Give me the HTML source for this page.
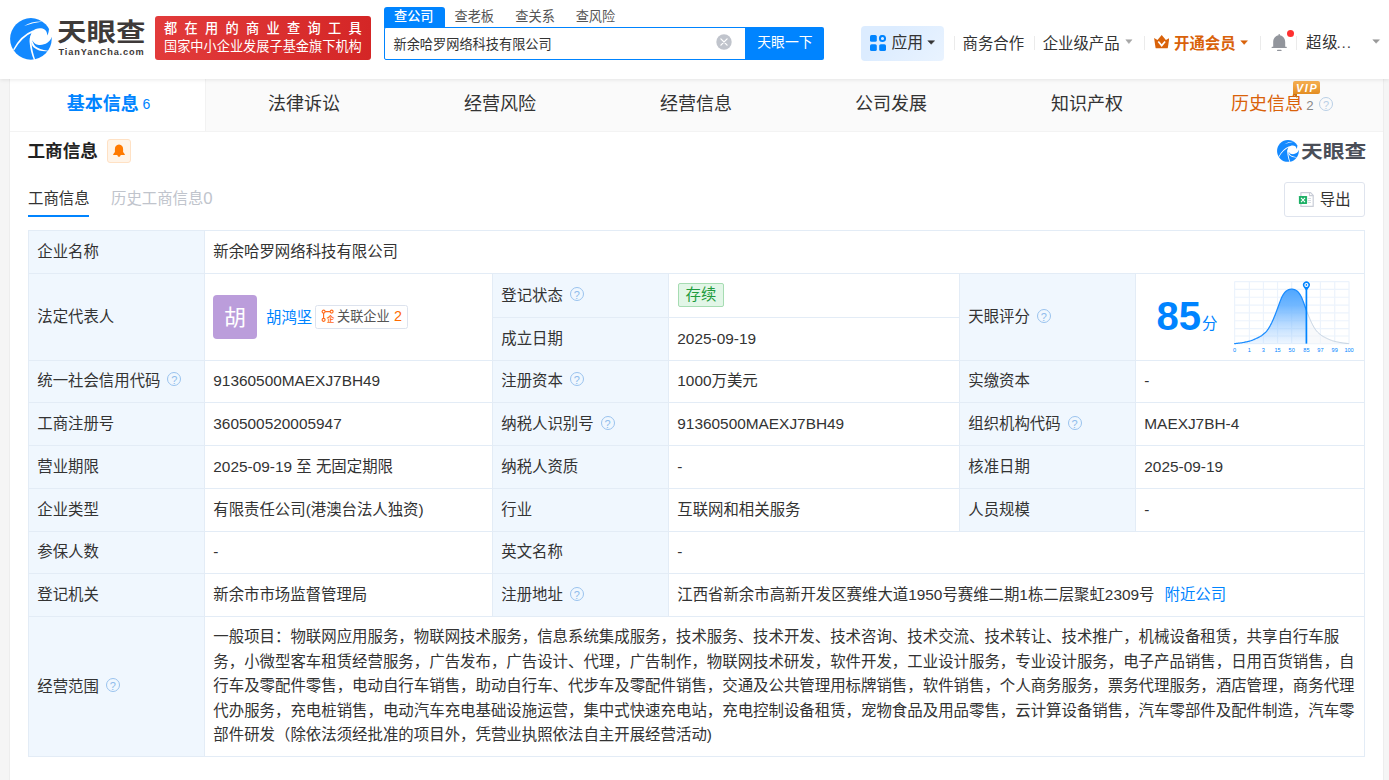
<!DOCTYPE html>
<html lang="zh-CN">
<head>
<meta charset="utf-8">
<title>天眼查</title>
<style>
*{box-sizing:border-box;margin:0;padding:0}
html,body{width:1389px;height:780px;overflow:hidden;background:#f5f5f5;}
body{font-family:"Liberation Sans","Noto Sans CJK SC",sans-serif;color:#333;font-size:15.4px;position:relative}
.abs{position:absolute;white-space:nowrap}
#hdr{position:absolute;left:0;top:0;width:1389px;height:79px;background:#fff;box-shadow:0 1px 4px rgba(0,0,0,.09);z-index:5}
#main{position:absolute;left:9px;top:78px;width:1375px;height:702px;background:#fff;border-left:1px solid #ededed;border-right:1px solid #ededed;box-sizing:border-box}
#tabs{position:absolute;left:0;top:0;width:1373px;height:54px;background:#fafafa;border-bottom:1px solid #f3f3f3}
.tab{position:absolute;top:1px;height:52px;width:196px;text-align:center;line-height:50px;font-size:18px;color:#333}
.tab.on{background:#fff;color:#0084ff;font-weight:bold;border-right:1px solid #f2f2f2}
table{position:absolute;left:18px;top:152px;width:1336px;border-collapse:collapse;table-layout:fixed}
td{border:1px solid #e3ecf6;padding:0 8.3px;font-size:15.4px;line-height:22px;vertical-align:middle;color:#333;white-space:nowrap}
td.l{background:#f0f7fe}
.q{display:inline-block;width:14px;height:14px;border:1.45px solid #9ac3ee;border-radius:50%;vertical-align:-0.9px;margin-left:6.9px;color:#8fbcec;font:11px/15px "Liberation Sans",sans-serif;text-align:center;overflow:hidden}
a{color:#0084ff;text-decoration:none}
tr.up td{padding-bottom:2px}
</style>
</head>
<body>
<div id="hdr">
  <svg class="abs" style="left:10px;top:17.5px" width="42" height="42" viewBox="0 0 42 42"><circle cx="20.9" cy="20.9" r="20.8" fill="#1389ff"/>
<g fill="#fff">
<path d="M3.1 31.6 Q10.4 17.2 22.6 12.5 L23.6 14 Q12 18.6 4.1 32.4 Z"/>
<path d="M22.3 13 C25.5 10.4 31 9 34.9 11.8 C36.4 13 37.2 15 37.3 17.4 C38.3 15.6 38.8 13.6 38.9 11.6 L44 9 L44 19.6 L41.7 19.1 C40 24.6 34 27.9 27.7 26.8 C25.2 26.3 23.6 25 22.4 22.6 L21.2 24 L19.8 21 Z"/>
<path d="M22.7 13.3 C20.3 17 19.3 20.5 19.6 24 C20 30.5 21.6 36.5 24 42.2 L25.4 42.2 C23.2 36 21.9 30.5 21.7 26 L22.4 22.6 Z"/>
<path d="M22.4 22.6 C23 25 24 27 25.6 28.4 C28 30.4 32 31.6 37.9 32.7 L37.9 33.2 C32 33.6 27.5 32.6 24.2 29.8 C22.8 28.6 22 27.4 21.6 26 Z"/>
<path d="M14.1 7.9 Q22 3 32.8 3.5 Q22.5 5 14.1 7.9 Z"/>
</g></svg>
  <div class="abs" id="lg1" style="left:57px;top:13px;font-size:25px;font-weight:700;color:#3e3a39;line-height:38px;transform-origin:0 50%;transform:scaleX(1.18)">天眼查</div>
  <div class="abs" id="lg2" style="left:58.5px;top:45.6px;font-size:9.2px;font-weight:bold;color:#3e3a39;line-height:12px;letter-spacing:.87px">TianYanCha.com</div>
  <div class="abs" style="left:155px;top:16px;width:216px;height:44px;border-radius:3px;background:linear-gradient(90deg,#e23b3b,#d42626);"></div>
  <div class="abs" id="bn1" style="left:164px;top:19px;font-size:13.2px;font-weight:500;color:#fff;letter-spacing:7.3px;line-height:19px">都在用的商业查询工具</div>
  <div class="abs" id="bn2" style="left:164px;top:37.4px;font-size:13.2px;color:#fff;line-height:19px;font-weight:400">国家中小企业发展子基金旗下机构</div>
  <div class="abs" style="left:384px;top:6.6px;width:61px;height:21px;background:#0084ff;border-radius:3px 3px 0 0"></div>
  <div class="abs" id="st1" style="left:394px;top:6.5px;font-size:13.2px;color:#fff;line-height:20px;font-weight:500">查公司</div>
  <div class="abs" id="st2" style="left:454.5px;top:7px;font-size:13.2px;color:#555;line-height:20px">查老板</div>
  <div class="abs" id="st3" style="left:515.3px;top:7px;font-size:13.2px;color:#555;line-height:20px">查关系</div>
  <div class="abs" id="st4" style="left:575.7px;top:7px;font-size:13.2px;color:#555;line-height:20px">查风险</div>
  <div class="abs" style="left:384px;top:27px;width:362px;height:33px;border:1px solid #0084ff;border-radius:2px 0 0 2px;background:#fff"></div>
  <div class="abs" id="sq" style="left:393.5px;top:35px;font-size:13.2px;color:#333;line-height:20px">新余哈罗网络科技有限公司</div>
  <svg class="abs" style="left:716px;top:34px" width="16" height="16" viewBox="0 0 16 16"><circle cx="8" cy="8" r="7.7" fill="#c0c4cc"/><path d="M4.9 4.9L11.1 11.1M11.1 4.9L4.9 11.1" stroke="#fff" stroke-width="1.25" stroke-linecap="round"/></svg>
  <div class="abs" style="left:745px;top:27px;width:79px;height:33px;background:#0084ff;border-radius:0 2px 2px 0"></div>
  <div class="abs" id="sb" style="left:757.3px;top:32px;font-size:13.8px;color:#fff;line-height:22px">天眼一下</div>
  <div class="abs" style="left:861px;top:26px;width:83px;height:35px;background:linear-gradient(135deg,#dcecff 30%,#e9f3ff);border-radius:4px"></div>
  <svg class="abs" style="left:870.3px;top:35.1px" width="16" height="16" viewBox="0 0 16 16"><rect x="0" y="0" width="6.8" height="6.8" rx="1.6" fill="#0084ff"/><rect x="0" y="9.2" width="6.8" height="6.8" rx="1.6" fill="#0084ff"/><rect x="9.2" y="9.2" width="6.8" height="6.8" rx="1.6" fill="#0084ff"/><circle cx="12.5" cy="3.5" r="2.55" fill="none" stroke="#0084ff" stroke-width="2"/></svg>
  <div class="abs" id="n1" style="left:891.5px;top:31px;font-size:15.8px;color:#333;line-height:24px">应用</div>
  <svg class="abs" style="left:926.6px;top:39.7px" width="8.4" height="5.0" viewBox="-0.5 -0.5 8.4 5.0"><path d="M0.3 0.2 H7.1000000000000005 L3.7 3.8 Z" fill="#333" stroke="#333" stroke-width=".5" stroke-linejoin="round"/></svg>
  <div class="abs" style="left:954px;top:36px;width:1px;height:14px;background:#ebebeb"></div>
  <div class="abs" id="n2" style="left:962.5px;top:32px;font-size:15.4px;color:#333;line-height:24px">商务合作</div>
  <div class="abs" style="left:1034px;top:36px;width:1px;height:14px;background:#ebebeb"></div>
  <div class="abs" id="n3" style="left:1042.7px;top:31.5px;font-size:15.4px;color:#333;line-height:24px">企业级产品</div>
  <svg class="abs" style="left:1124.8px;top:39.4px" width="7.8" height="5.3" viewBox="-0.5 -0.5 7.8 5.3"><path d="M0.3 0.2 H6.5 L3.4 4.1 Z" fill="#a6a6a6" stroke="#a6a6a6" stroke-width=".5" stroke-linejoin="round"/></svg>
  <div class="abs" style="left:1144px;top:36px;width:1px;height:14px;background:#ebebeb"></div>
  <svg class="abs" style="left:1154px;top:35px" width="15.4" height="13.5" viewBox="0 0 15.4 13.5"><path d="M0.1 3 L3.5 4.9 L7.7 0 L11.9 4.9 L15.3 3 L13.9 12.4 Q13.8 13.3 13 13.3 H2.4 Q1.6 13.3 1.5 12.4 Z" fill="#d9620a"/><path d="M4.3 6.5 L7.7 10.6 L11.1 6.5" stroke="#fff" stroke-width="1.7" fill="none"/></svg>
  <div class="abs" id="n4" style="left:1174px;top:31.5px;font-size:15.4px;color:#d9620a;font-weight:bold;line-height:24px">开通会员</div>
  <svg class="abs" style="left:1240.4px;top:39.7px" width="8.3" height="5.1" viewBox="-0.5 -0.5 8.3 5.1"><path d="M0.3 0.2 H7.0 L3.65 3.8999999999999995 Z" fill="#d9620a" stroke="#d9620a" stroke-width=".5" stroke-linejoin="round"/></svg>
  <div class="abs" style="left:1260px;top:36px;width:1px;height:14px;background:#ebebeb"></div>
  <svg class="abs" style="left:1271px;top:33px" width="17" height="19" viewBox="0 0 17 19"><path d="M7.6 1 h1.2 v1.2 C12 2.8 14.2 5.5 14.2 9 V13.7 H15.3 Q15.8 13.7 15.8 14.4 Q15.8 15.1 15.3 15.1 H1.1 Q0.6 15.1 0.6 14.4 Q0.6 13.7 1.1 13.7 H2.2 V9 C2.2 5.5 4.4 2.8 7.6 2.2 Z" fill="#92959c"/><rect x="6" y="16.7" width="4.6" height="1.4" rx=".7" fill="#92959c"/></svg>
  <div class="abs" style="left:1287px;top:30px;width:7px;height:7px;border-radius:50%;background:#ff3030"></div>
  <div class="abs" style="left:1296px;top:36px;width:1px;height:14px;background:#ebebeb"></div>
  <div class="abs" id="n5" style="left:1306px;top:30.5px;font-size:15.4px;color:#333;line-height:24px;letter-spacing:.9px">超级<span style="margin-left:-2.2px;color:#444">...</span></div>
  <svg class="abs" style="left:1372.4px;top:38.7px" width="8.3" height="5.0" viewBox="-0.5 -0.5 8.3 5.0"><path d="M0.3 0.2 H7.0 L3.65 3.8 Z" fill="#999" stroke="#999" stroke-width=".5" stroke-linejoin="round"/></svg>
</div>

<div id="main">
  <div id="tabs">
    <div class="tab on" style="left:0;width:196px;padding-left:2px"><span id="t1">基本信息</span><span style="font-size:14px;font-weight:normal;margin-left:3.6px;position:relative;top:-1px">6</span></div>
    <div class="tab" style="left:196px"><span id="t2">法律诉讼</span></div>
    <div class="tab" style="left:392px"><span id="t3">经营风险</span></div>
    <div class="tab" style="left:588px"><span id="t4">经营信息</span></div>
    <div class="tab" style="left:783px"><span id="t5">公司发展</span></div>
    <div class="tab" style="left:979px"><span id="t6">知识产权</span></div>
    <div class="tab" style="left:1175px;color:#d9620a;text-align:left;padding-left:46px"><span id="t7">历史信息</span><span style="font-size:13.2px;color:#888;margin-left:3.2px">2</span><span class="q" style="margin-left:5.6px;border-color:#b9cfe6;color:#b9cfe6">?</span></div>
    <!-- VIP -->
    <div class="abs" style="left:1283px;top:3.4px;width:27px;height:12.4px;border-radius:2px 2px 2px 0;background:linear-gradient(180deg,#f7b052,#e38d22)"></div>
    <div class="abs" style="left:1283px;top:15.8px;width:0;height:0;border-top:4px solid #c97414;border-left:4px solid transparent"></div>
    <div class="abs" id="vip" style="left:1286px;top:3.6px;font-size:10.8px;font-weight:bold;font-style:italic;color:#fff;line-height:12px;letter-spacing:1.6px">VIP</div>
  </div>
  <div class="abs" id="sec" style="left:17.5px;top:60px;font-size:17.6px;font-weight:bold;color:#222;line-height:26px">工商信息</div>
  <div class="abs" style="left:97px;top:61px;width:24px;height:24px;background:#fff4e8;border:1px solid #ffe1c4;border-radius:3px"></div>
  <svg class="abs" style="left:102px;top:66px" width="14" height="14" viewBox="0 0 14 14"><path d="M7 0.5 C4.2 0.5 2.9 2.7 2.9 5 V8 L1.2 10.2 V11 H12.8 V10.2 L11.1 8 V5 C11.1 2.7 9.8 0.5 7 0.5 Z" fill="#ff7a00"/><path d="M5.4 11 H8.6 C8.6 13.4 5.4 13.4 5.4 11Z" fill="#ff7a00"/></svg>
  <!-- watermark logo -->
  <svg class="abs" style="left:1267px;top:62px" width="22" height="22" viewBox="0 0 42 42"><circle cx="20.9" cy="20.9" r="20.8" fill="#1389ff"/>
<g fill="#fff">
<path d="M3.1 31.6 Q10.4 17.2 22.6 12.5 L23.6 14 Q12 18.6 4.1 32.4 Z"/>
<path d="M22.3 13 C25.5 10.4 31 9 34.9 11.8 C36.4 13 37.2 15 37.3 17.4 C38.3 15.6 38.8 13.6 38.9 11.6 L44 9 L44 19.6 L41.7 19.1 C40 24.6 34 27.9 27.7 26.8 C25.2 26.3 23.6 25 22.4 22.6 L21.2 24 L19.8 21 Z"/>
<path d="M22.7 13.3 C20.3 17 19.3 20.5 19.6 24 C20 30.5 21.6 36.5 24 42.2 L25.4 42.2 C23.2 36 21.9 30.5 21.7 26 L22.4 22.6 Z"/>
<path d="M22.4 22.6 C23 25 24 27 25.6 28.4 C28 30.4 32 31.6 37.9 32.7 L37.9 33.2 C32 33.6 27.5 32.6 24.2 29.8 C22.8 28.6 22 27.4 21.6 26 Z"/>
<path d="M14.1 7.9 Q22 3 32.8 3.5 Q22.5 5 14.1 7.9 Z"/>
</g></svg>
  <div class="abs" id="wm" style="left:1291px;top:58px;font-size:18.6px;font-weight:700;color:#4a4e57;line-height:32px;transform-origin:0 50%;transform:scaleX(1.17)">天眼查</div>
  <div class="abs" id="su1" style="left:18px;top:110px;font-size:15.4px;color:#333;line-height:22px">工商信息</div>
  <div class="abs" style="left:18px;top:137px;width:61px;height:2px;background:#0084ff"></div>
  <div class="abs" id="su2" style="left:101px;top:110px;font-size:15.4px;color:#c0c4cc;line-height:22px">历史工商信息<span style="font-size:16.8px;line-height:1;position:relative;top:-.4px">0</span></div>
  <div class="abs" style="left:1274px;top:104px;width:81px;height:35px;border:1px solid #dfe4ee;border-radius:3px;background:#fff"></div>
  <svg class="abs" style="left:1288px;top:113px" width="17" height="17" viewBox="0 0 17 17"><path d="M2.9 1.7 H12.6 L15.2 4.3 V15.4 H2.9 Z" fill="#fff" stroke="#c9cdd7" stroke-width="1.2" stroke-linejoin="round"/><path d="M11.5 1.7 V4.6 H15.2" fill="none" stroke="#c9cdd7" stroke-width="1.1"/><path d="M10.1 7.5h2.9M10.1 9.5h2.9M10.1 11.5h2.9" stroke="#d3d6de" stroke-width=".9"/><rect x="0.9" y="5" width="8.2" height="7.9" rx=".6" fill="#1eb066"/><path d="M3 6.9 L7 11.1 M7 6.9 L3 11.1" stroke="#fff" stroke-width="1.05"/></svg>
  <div class="abs" id="ex" style="left:1309.8px;top:111px;font-size:15.4px;color:#333;line-height:22px">导出</div>

  <table>
    <colgroup><col style="width:176px"><col style="width:288px"><col style="width:176px"><col style="width:291px"><col style="width:176px"><col style="width:229px"></colgroup>
    <tr style="height:43px"><td class="l">企业名称</td><td colspan="5">新余哈罗网络科技有限公司</td></tr>
    <tr style="height:44px"><td class="l" rowspan="2">法定代表人</td><td rowspan="2"></td><td class="l">登记状态<span class="q">?</span></td><td><span style="display:inline-block;height:24px;line-height:22px;padding:0 6.5px;border:1px solid #a6dcb2;background:#e2f6e7;color:#1f9b3e;border-radius:2px;position:relative;top:-1px;left:.7px">存续</span></td><td class="l" rowspan="2">天眼评分<span class="q">?</span></td><td rowspan="2"></td></tr>
    <tr style="height:43px"><td class="l">成立日期</td><td>2025-09-19</td></tr>
    <tr class="up" style="height:42px"><td class="l">统一社会信用代码<span class="q">?</span></td><td>91360500MAEXJ7BH49</td><td class="l">注册资本<span class="q">?</span></td><td>1000万美元</td><td class="l">实缴资本</td><td>-</td></tr>
    <tr style="height:43px"><td class="l">工商注册号</td><td>360500520005947</td><td class="l">纳税人识别号<span class="q">?</span></td><td>91360500MAEXJ7BH49</td><td class="l">组织机构代码<span class="q">?</span></td><td>MAEXJ7BH-4</td></tr>
    <tr style="height:43px"><td class="l">营业期限</td><td>2025-09-19 至 无固定期限</td><td class="l">纳税人资质</td><td>-</td><td class="l">核准日期</td><td>2025-09-19</td></tr>
    <tr style="height:43px"><td class="l">企业类型</td><td>有限责任公司(港澳台法人独资)</td><td class="l">行业</td><td>互联网和相关服务</td><td class="l">人员规模</td><td>-</td></tr>
    <tr class="up" style="height:42px"><td class="l">参保人数</td><td>-</td><td class="l">英文名称</td><td colspan="3">-</td></tr>
    <tr style="height:43px"><td class="l">登记机关</td><td>新余市市场监督管理局</td><td class="l">注册地址<span class="q">?</span></td><td colspan="3">江西省新余市高新开发区赛维大道1950号赛维二期1栋二层聚虹2309号<a style="margin-left:10px">附近公司</a></td></tr>
    <tr style="height:140px"><td class="l">经营范围<span class="q">?</span></td><td colspan="5" style="white-space:normal;line-height:24.4px;font-size:15.43px;padding-right:4px">一般项目：物联网应用服务，物联网技术服务，信息系统集成服务，技术服务、技术开发、技术咨询、技术交流、技术转让、技术推广，机械设备租赁，共享自行车服务，小微型客车租赁经营服务，广告发布，广告设计、代理，广告制作，物联网技术研发，软件开发，工业设计服务，专业设计服务，电子产品销售，日用百货销售，自行车及零配件零售，电动自行车销售，助动自行车、代步车及零配件销售，交通及公共管理用标牌销售，软件销售，个人商务服务，票务代理服务，酒店管理，商务代理代办服务，充电桩销售，电动汽车充电基础设施运营，集中式快速充电站，充电控制设备租赁，宠物食品及用品零售，云计算设备销售，汽车零部件及配件制造，汽车零部件研发（除依法须经批准的项目外，凭营业执照依法自主开展经营活动)</td></tr>
  </table>
  <!-- legal rep overlay -->
  <div class="abs" style="left:203px;top:217px;width:44px;height:44px;border-radius:4px;background:#bb9ddb"></div>
  <div class="abs" id="av" style="left:214px;top:224px;font-size:22px;color:#fff;line-height:32px">胡</div>
  <div class="abs" id="nm" style="left:256px;top:228.6px;font-size:15.4px;color:#0084ff;line-height:22px">胡鸿坚</div>
  <div class="abs" style="left:305px;top:227px;width:93px;height:24px;border:1px solid #dde3ee;border-radius:2.5px;background:#fff"></div>
  <svg class="abs" style="left:310.6px;top:231.1px" width="14" height="14" viewBox="0 0 14 14"><g fill="none" stroke="#ff6a1a" stroke-width="1.15"><circle cx="2.6" cy="2.6" r="1.5"/><circle cx="10.6" cy="2.6" r="1.5"/><circle cx="2.6" cy="10.8" r="1.5"/><path d="M4.1 2.6 H9.1 M2.6 4.1 V9.3"/></g><text x="9.5" y="12.6" font-size="7.6" font-weight="bold" fill="#ff6a1a" text-anchor="middle" font-family="Noto Sans CJK SC, sans-serif">企</text></svg>
  <div class="abs" id="rl" style="left:327px;top:229px;font-size:13.2px;color:#555;line-height:20px">关联企业 <span style="color:#ff6a00;margin-left:.6px;font-size:14.4px;line-height:1">2</span></div>
  <!-- score -->
  <div class="abs" id="sc" style="left:1146.5px;top:214px;font-size:40px;font-weight:bold;color:#0084ff;line-height:48px">85</div>
  <div class="abs" id="fen" style="left:1192px;top:235px;font-size:15.4px;color:#0084ff;line-height:22px">分</div>
  <svg class="abs" style="left:1220px;top:198px" width="130" height="80" viewBox="0 0 130 80">
<defs><linearGradient id="cg" x1="0" y1="0" x2="0" y2="1"><stop offset="0" stop-color="#4ea6ff"/><stop offset=".3" stop-color="#6ab4ff" stop-opacity=".95"/><stop offset="1" stop-color="#9dcbff" stop-opacity=".18"/></linearGradient></defs>
<g stroke="#ecf3fc" stroke-width="1.2"><line x1="4.61" y1="5.54" x2="4.61" y2="67.64"/><line x1="19.38" y1="5.54" x2="19.38" y2="67.64"/><line x1="33.41" y1="5.54" x2="33.41" y2="67.64"/><line x1="47.53" y1="5.54" x2="47.53" y2="67.64"/><line x1="61.65" y1="5.54" x2="61.65" y2="67.64"/><line x1="76.41" y1="5.54" x2="76.41" y2="67.64"/><line x1="90.44" y1="5.54" x2="90.44" y2="67.64"/><line x1="104.74" y1="5.54" x2="104.74" y2="67.64"/><line x1="119.05" y1="5.54" x2="119.05" y2="67.64"/><line x1="4.61" y1="5.54" x2="119.05" y2="5.54"/><line x1="4.61" y1="13.38" x2="119.05" y2="13.38"/><line x1="4.61" y1="21.23" x2="119.05" y2="21.23"/><line x1="4.61" y1="29.07" x2="119.05" y2="29.07"/><line x1="4.61" y1="36.91" x2="119.05" y2="36.91"/><line x1="4.61" y1="44.76" x2="119.05" y2="44.76"/><line x1="4.61" y1="52.60" x2="119.05" y2="52.60"/><line x1="4.61" y1="59.99" x2="119.05" y2="59.99"/><line x1="4.61" y1="67.64" x2="119.05" y2="67.64"/></g>
<path d="M4.15 67.64 L4.71 67.58 L5.45 67.51 L6.34 67.42 L7.32 67.32 L8.36 67.20 L9.40 67.08 L10.42 66.95 L11.35 66.81 L12.25 66.67 L13.18 66.50 L14.11 66.32 L15.03 66.14 L15.93 65.95 L16.78 65.77 L17.56 65.59 L18.27 65.43 L18.89 65.28 L19.42 65.14 L19.89 65.01 L20.32 64.89 L20.72 64.76 L21.12 64.63 L21.52 64.48 L21.96 64.32 L22.43 64.15 L22.89 63.97 L23.35 63.78 L23.81 63.58 L24.27 63.38 L24.73 63.18 L25.19 62.97 L25.66 62.75 L26.12 62.54 L26.60 62.31 L27.07 62.08 L27.55 61.85 L28.02 61.61 L28.48 61.38 L28.92 61.14 L29.35 60.91 L29.74 60.69 L30.10 60.50 L30.44 60.31 L30.78 60.12 L31.12 59.92 L31.47 59.68 L31.86 59.40 L32.30 59.06 L32.79 58.67 L33.32 58.24 L33.89 57.77 L34.47 57.27 L35.06 56.74 L35.64 56.19 L36.20 55.60 L36.73 55.00 L37.23 54.38 L37.70 53.74 L38.17 53.08 L38.62 52.38 L39.07 51.66 L39.52 50.91 L39.96 50.11 L40.42 49.28 L40.88 48.40 L41.35 47.47 L41.82 46.51 L42.28 45.51 L42.75 44.48 L43.21 43.44 L43.66 42.40 L44.11 41.34 L44.56 40.27 L45.00 39.15 L45.45 38.01 L45.89 36.86 L46.32 35.72 L46.74 34.60 L47.14 33.51 L47.53 32.48 L47.89 31.50 L48.24 30.54 L48.57 29.61 L48.89 28.71 L49.20 27.84 L49.50 26.99 L49.81 26.17 L50.11 25.38 L50.41 24.62 L50.70 23.89 L50.98 23.19 L51.25 22.51 L51.53 21.86 L51.82 21.23 L52.11 20.62 L52.42 20.03 L52.74 19.44 L53.07 18.87 L53.41 18.32 L53.76 17.79 L54.11 17.29 L54.46 16.81 L54.82 16.37 L55.19 15.97 L55.55 15.60 L55.92 15.26 L56.29 14.96 L56.67 14.69 L57.05 14.45 L57.44 14.22 L57.83 14.02 L58.23 13.84 L58.64 13.68 L59.06 13.55 L59.49 13.44 L59.92 13.35 L60.35 13.28 L60.78 13.23 L61.22 13.21 L61.65 13.20 L62.08 13.21 L62.51 13.23 L62.94 13.28 L63.38 13.35 L63.81 13.44 L64.23 13.55 L64.65 13.68 L65.06 13.84 L65.46 14.02 L65.85 14.22 L66.24 14.45 L66.62 14.69 L67.00 14.96 L67.37 15.26 L67.74 15.60 L68.11 15.97 L68.47 16.37 L68.83 16.81 L69.19 17.29 L69.54 17.79 L69.88 18.32 L70.22 18.87 L70.55 19.44 L70.87 20.03 L71.18 20.62 L71.48 21.23 L71.76 21.86 L72.04 22.51 L72.32 23.19 L72.60 23.89 L72.88 24.62 L73.18 25.38 L73.49 26.17 L73.79 26.99 L74.09 27.84 L74.40 28.71 L74.72 29.61 L75.06 30.54 L75.40 31.50 L75.77 32.48 L76.15 33.51 L76.41 34.21 L76.41 67.64 L4.15 67.64 Z" fill="url(#cg)"/>
<path d="M76.41 34.21 L76.55 34.60 L76.97 35.72 L77.40 36.86 L77.84 38.01 L78.29 39.15 L78.73 40.27 L79.18 41.34 L79.63 42.40 L80.08 43.44 L80.54 44.48 L81.01 45.51 L81.48 46.51 L81.94 47.47 L82.41 48.40 L82.87 49.28 L83.33 50.11 L83.78 50.91 L84.22 51.66 L84.67 52.38 L85.12 53.08 L85.59 53.74 L86.07 54.38 L86.56 55.00 L87.09 55.60 L87.65 56.19 L88.24 56.74 L88.82 57.27 L89.41 57.77 L89.97 58.24 L90.50 58.67 L90.99 59.06 L91.43 59.40 L91.82 59.68 L92.18 59.92 L92.52 60.12 L92.85 60.31 L93.19 60.50 L93.55 60.69 L93.95 60.91 L94.37 61.14 L94.82 61.38 L95.28 61.61 L95.75 61.85 L96.22 62.08 L96.70 62.31 L97.17 62.54 L97.64 62.75 L98.10 62.97 L98.56 63.18 L99.02 63.38 L99.48 63.58 L99.94 63.78 L100.41 63.97 L100.87 64.15 L101.33 64.32 L101.77 64.48 L102.18 64.63 L102.57 64.76 L102.97 64.89 L103.40 65.01 L103.87 65.14 L104.40 65.28 L105.02 65.43 L105.73 65.59 L106.52 65.77 L107.37 65.95 L108.26 66.14 L109.18 66.32 L110.12 66.50 L111.04 66.67 L111.94 66.81 L112.88 66.95 L113.89 67.08 L114.94 67.20 L115.97 67.32 L116.96 67.42 L117.84 67.51 L118.58 67.58 L119.14 67.64 L119.14 67.64 L76.41 67.64 Z" fill="#f2f4f7" fill-opacity=".55"/>
<path d="M76.41 34.21 L76.55 34.60 L76.97 35.72 L77.40 36.86 L77.84 38.01 L78.29 39.15 L78.73 40.27 L79.18 41.34 L79.63 42.40 L80.08 43.44 L80.54 44.48 L81.01 45.51 L81.48 46.51 L81.94 47.47 L82.41 48.40 L82.87 49.28 L83.33 50.11 L83.78 50.91 L84.22 51.66 L84.67 52.38 L85.12 53.08 L85.59 53.74 L86.07 54.38 L86.56 55.00 L87.09 55.60 L87.65 56.19 L88.24 56.74 L88.82 57.27 L89.41 57.77 L89.97 58.24 L90.50 58.67 L90.99 59.06 L91.43 59.40 L91.82 59.68 L92.18 59.92 L92.52 60.12 L92.85 60.31 L93.19 60.50 L93.55 60.69 L93.95 60.91 L94.37 61.14 L94.82 61.38 L95.28 61.61 L95.75 61.85 L96.22 62.08 L96.70 62.31 L97.17 62.54 L97.64 62.75 L98.10 62.97 L98.56 63.18 L99.02 63.38 L99.48 63.58 L99.94 63.78 L100.41 63.97 L100.87 64.15 L101.33 64.32 L101.77 64.48 L102.18 64.63 L102.57 64.76 L102.97 64.89 L103.40 65.01 L103.87 65.14 L104.40 65.28 L105.02 65.43 L105.73 65.59 L106.52 65.77 L107.37 65.95 L108.26 66.14 L109.18 66.32 L110.12 66.50 L111.04 66.67 L111.94 66.81 L112.88 66.95 L113.89 67.08 L114.94 67.20 L115.97 67.32 L116.96 67.42 L117.84 67.51 L118.58 67.58 L119.14 67.64" fill="none" stroke="#c3d1e1" stroke-width="1"/>
<path d="M4.15 67.64 L4.71 67.58 L5.45 67.51 L6.34 67.42 L7.32 67.32 L8.36 67.20 L9.40 67.08 L10.42 66.95 L11.35 66.81 L12.25 66.67 L13.18 66.50 L14.11 66.32 L15.03 66.14 L15.93 65.95 L16.78 65.77 L17.56 65.59 L18.27 65.43 L18.89 65.28 L19.42 65.14 L19.89 65.01 L20.32 64.89 L20.72 64.76 L21.12 64.63 L21.52 64.48 L21.96 64.32 L22.43 64.15 L22.89 63.97 L23.35 63.78 L23.81 63.58 L24.27 63.38 L24.73 63.18 L25.19 62.97 L25.66 62.75 L26.12 62.54 L26.60 62.31 L27.07 62.08 L27.55 61.85 L28.02 61.61 L28.48 61.38 L28.92 61.14 L29.35 60.91 L29.74 60.69 L30.10 60.50 L30.44 60.31 L30.78 60.12 L31.12 59.92 L31.47 59.68 L31.86 59.40 L32.30 59.06 L32.79 58.67 L33.32 58.24 L33.89 57.77 L34.47 57.27 L35.06 56.74 L35.64 56.19 L36.20 55.60 L36.73 55.00 L37.23 54.38 L37.70 53.74 L38.17 53.08 L38.62 52.38 L39.07 51.66 L39.52 50.91 L39.96 50.11 L40.42 49.28 L40.88 48.40 L41.35 47.47 L41.82 46.51 L42.28 45.51 L42.75 44.48 L43.21 43.44 L43.66 42.40 L44.11 41.34 L44.56 40.27 L45.00 39.15 L45.45 38.01 L45.89 36.86 L46.32 35.72 L46.74 34.60 L47.14 33.51 L47.53 32.48 L47.89 31.50 L48.24 30.54 L48.57 29.61 L48.89 28.71 L49.20 27.84 L49.50 26.99 L49.81 26.17 L50.11 25.38 L50.41 24.62 L50.70 23.89 L50.98 23.19 L51.25 22.51 L51.53 21.86 L51.82 21.23 L52.11 20.62 L52.42 20.03 L52.74 19.44 L53.07 18.87 L53.41 18.32 L53.76 17.79 L54.11 17.29 L54.46 16.81 L54.82 16.37 L55.19 15.97 L55.55 15.60 L55.92 15.26 L56.29 14.96 L56.67 14.69 L57.05 14.45 L57.44 14.22 L57.83 14.02 L58.23 13.84 L58.64 13.68 L59.06 13.55 L59.49 13.44 L59.92 13.35 L60.35 13.28 L60.78 13.23 L61.22 13.21 L61.65 13.20 L62.08 13.21 L62.51 13.23 L62.94 13.28 L63.38 13.35 L63.81 13.44 L64.23 13.55 L64.65 13.68 L65.06 13.84 L65.46 14.02 L65.85 14.22 L66.24 14.45 L66.62 14.69 L67.00 14.96 L67.37 15.26 L67.74 15.60 L68.11 15.97 L68.47 16.37 L68.83 16.81 L69.19 17.29 L69.54 17.79 L69.88 18.32 L70.22 18.87 L70.55 19.44 L70.87 20.03 L71.18 20.62 L71.48 21.23 L71.76 21.86 L72.04 22.51 L72.32 23.19 L72.60 23.89 L72.88 24.62 L73.18 25.38 L73.49 26.17 L73.79 26.99 L74.09 27.84 L74.40 28.71 L74.72 29.61 L75.06 30.54 L75.40 31.50 L75.77 32.48 L76.15 33.51 L76.41 34.21" fill="none" stroke="#1a8cff" stroke-width="1.25"/>
<line x1="76.41" y1="12" x2="76.41" y2="67.64" stroke="#0084ff" stroke-width="1.7"/>
<path d="M76.41 14.85 L73.51 10.95 A3.5 3.5 0 1 1 79.31 10.95 Z" fill="#0084ff"/>
<circle cx="76.41" cy="8.95" r="2.05" fill="#fff"/><circle cx="76.41" cy="8.95" r=".85" fill="#0084ff"/>
<g font-family="Liberation Sans, sans-serif" font-size="5.6" fill="#0084ff"><text x="4.61" y="75.6" text-anchor="middle">0</text><text x="19.38" y="75.6" text-anchor="middle">1</text><text x="33.41" y="75.6" text-anchor="middle">3</text><text x="47.53" y="75.6" text-anchor="middle">15</text><text x="61.65" y="75.6" text-anchor="middle">50</text><text x="76.41" y="75.6" text-anchor="middle">85</text><text x="90.44" y="75.6" text-anchor="middle">97</text><text x="104.74" y="75.6" text-anchor="middle">99</text><text x="119.05" y="75.6" text-anchor="middle">100</text></g>
</svg>
</div>
</body>
</html>
